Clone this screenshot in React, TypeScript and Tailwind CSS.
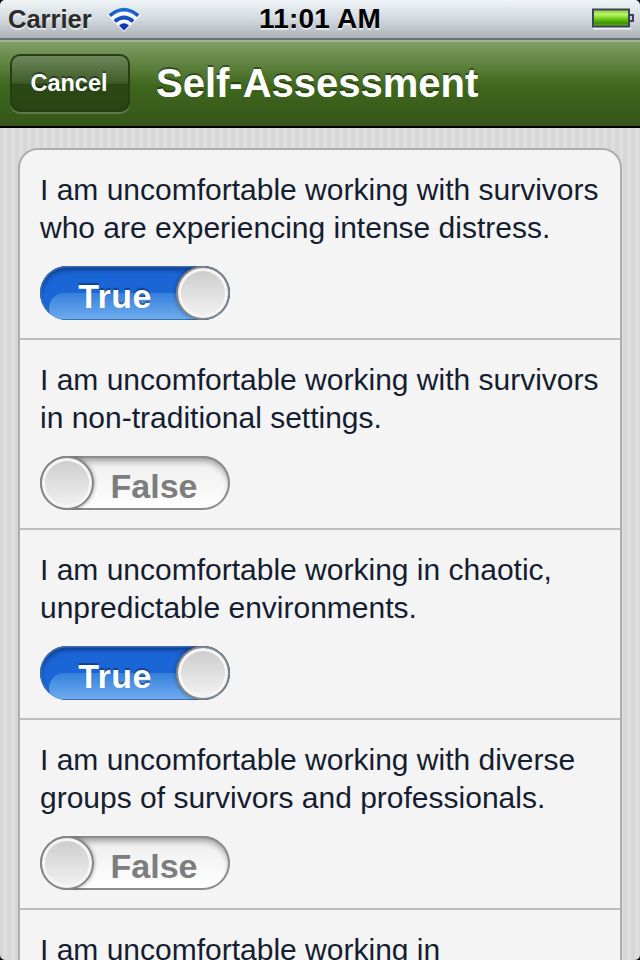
import { useState } from 'react'
import clsx from 'clsx'

const QUESTIONS = [
  { lines: ['I am uncomfortable working with survivors', 'who are experiencing intense distress.'], answer: true },
  { lines: ['I am uncomfortable working with survivors', 'in non-traditional settings.'], answer: false },
  { lines: ['I am uncomfortable working in chaotic,', 'unpredictable environments.'], answer: true },
  { lines: ['I am uncomfortable working with diverse', 'groups of survivors and professionals.'], answer: false },
  { lines: ['I am uncomfortable working in'], answer: false },
]

function WifiIcon() {
  return (
    <svg width="36" height="28" viewBox="0 0 36 28" className="block">
      <defs>
        <linearGradient id="wave" gradientUnits="userSpaceOnUse" x1="0" y1="4" x2="0" y2="26">
          <stop offset="0" stopColor="#1f6fd8" />
          <stop offset="1" stopColor="#0c2aa8" />
        </linearGradient>
      </defs>
      <path d="M18 28 1 11Q18-4 35 11Z" fill="#fff" opacity=".8" />
      <g fill="none" stroke="url(#wave)" strokeWidth="3.8">
        <path d="M3.8 11.6Q18-.4 32.2 11.6" />
        <path d="M8.8 17.4Q18 9.4 27.2 17.4" />
      </g>
      <path d="M18 26.5 13 21.4Q18 17 23 21.4Z" fill="#1238b0" />
    </svg>
  )
}

function BatteryIcon() {
  return (
    <svg width="44" height="22" viewBox="0 0 44 22" className="block">
      <defs>
        <linearGradient id="charge" x1="0" y1="0" x2="0" y2="1">
          <stop offset="0" stopColor="#7fd02c" />
          <stop offset=".3" stopColor="#b9f56b" />
          <stop offset=".55" stopColor="#6fcb14" />
          <stop offset=".8" stopColor="#3a9103" />
          <stop offset="1" stopColor="#65c015" />
        </linearGradient>
      </defs>
      <path d="M1 20.5H39" stroke="#fff" strokeWidth="2" opacity=".8" />
      <rect x="1" y="1.5" width="36" height="17" fill="url(#charge)" stroke="#40435c" strokeWidth="2" />
      <path d="M38 7h3v6h-3" fill="#c5cad6" stroke="#40435c" strokeWidth="2" />
    </svg>
  )
}

function StatusBar() {
  return (
    <div className="grid h-10 grid-cols-[1fr_auto_1fr] items-start border-b-2 border-[#686f77] bg-linear-to-b from-[#eff4f7] via-[#d2dadf] to-[#adb3b8] font-bold [text-shadow:0_2px_0_rgba(255,255,255,0.6)]">
      <div className="flex pl-2">
        <span className="pt-1 text-[25.5px] leading-[30px] text-[#2b2b2b]">Carrier</span>
        <div className="ml-[14px] pt-1">
          <WifiIcon />
        </div>
      </div>
      <span className="pt-1 text-[28px] leading-[30px] tracking-[0.2px] text-black">11:01 AM</span>
      <div className="flex justify-end pt-2 pr-1">
        <BatteryIcon />
      </div>
    </div>
  )
}

function NavBar() {
  return (
    <div className="flex h-[88px] items-start border-t-2 border-b-2 border-t-[#9fb58a] border-b-black bg-[linear-gradient(#7f9f65,#3f671c_52%,#34561a)] pl-2.5 font-bold text-white">
      <button
        type="button"
        className="mt-3 h-[58px] w-[120px] rounded-[10px] border-2 border-[#263d17] bg-[linear-gradient(#6e875b,#3d5c27_50%,#2b4914_52%,#294413)] pt-0.5 pr-0.5 text-[23.5px] shadow-[0_2px_0_rgba(255,255,255,0.2)] [text-shadow:0_-2px_0_rgba(0,0,0,0.4)]"
      >
        Cancel
      </button>
      <h1 className="mt-[18px] ml-[26px] text-[40px] leading-[46px] [text-shadow:0_-2px_0_rgba(0,0,0,0.4)]">
        Self-Assessment
      </h1>
    </div>
  )
}

function TrueFalseSwitch({ on, onToggle }: { on: boolean; onToggle: () => void }) {
  return (
    <button
      type="button"
      role="switch"
      aria-checked={on}
      onClick={onToggle}
      className={clsx(
        'flex h-[54px] w-[190px] items-center overflow-hidden rounded-full text-[34px] font-bold',
        on
          ? 'relative flex-row-reverse bg-[#1a66d6] text-white shadow-[inset_0_0_0_1.5px_#3d6fae,inset_0_4px_5px_rgba(0,20,70,0.55)] [text-shadow:0_-2px_1px_rgba(0,0,0,0.35)]'
          : 'bg-linear-to-b from-[#ededed] to-white text-[#7d7d7d] shadow-[inset_0_0_0_2px_#8c8c8c,inset_0_5px_6px_rgba(0,0,0,0.35)]'
      )}
    >
      {/* gloss over the lower half of the track */}
      {on && (
        <span className="absolute bottom-px left-[9px] h-[26px] w-[172px] rounded-t-[20px] rounded-b-[14px] bg-linear-to-b from-[#3580dc] to-[#6dabee]" />
      )}
      <span className="relative h-[54px] w-[54px] shrink-0 rounded-full border-2 border-[#858585] bg-linear-to-b from-[#cbcbcb] to-[#f3f3f3] shadow-[inset_0_0_0_3px_#f5f5f5,0_0_4px_rgba(0,0,0,0.4)]" />
      <span className={clsx('relative flex-1 pt-1.5', on ? 'pl-3.5 tracking-[0.4px]' : 'pr-4')}>{on ? 'True' : 'False'}</span>
    </button>
  )
}

export default function App() {
  const [answers, setAnswers] = useState(QUESTIONS.map((q) => q.answer))

  const toggle = (index: number) => {
    setAnswers(answers.map((a, i) => (i === index ? !a : a)))
  }

  return (
    <div className="h-[960px] w-[640px] bg-black font-['Liberation_Sans',Arial,sans-serif]">
      <div className="h-full overflow-hidden rounded-[5px]">
        <StatusBar />
        <NavBar />
        <main className="h-[832px] bg-[repeating-linear-gradient(90deg,#d6d6d6_0,#d6d6d6_2px,#dfdfdf_4px,#dfdfdf_6px,#d6d6d6_8px)] px-[18px] pt-5">
          <ul className="h-[1000px] rounded-t-[20px] border-2 border-[#adadad] bg-[#f4f4f4]">
            {QUESTIONS.map((q, i) => (
              <li key={i} className="h-[190px] border-b-2 border-[#bdbdbd] px-5 pt-[21px] text-[30px] leading-[38px] whitespace-nowrap text-[#151d30]">
                {q.lines.map((line) => (
                  <p key={line}>{line}</p>
                ))}
                <div className="pt-[19px]">
                  <TrueFalseSwitch on={answers[i]} onToggle={() => toggle(i)} />
                </div>
              </li>
            ))}
          </ul>
        </main>
      </div>
    </div>
  )
}
